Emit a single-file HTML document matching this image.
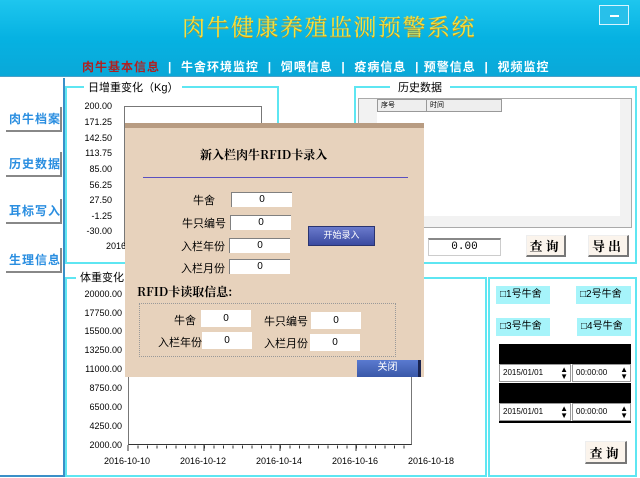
<!DOCTYPE html>
<html><head><meta charset="utf-8"><style>
*{margin:0;padding:0;box-sizing:border-box}
body{width:640px;height:478px;position:relative;overflow:hidden;background:#fff;font-family:"Liberation Sans","Noto Sans CJK SC",sans-serif;font-size:10px;color:#000}
.a{position:absolute;white-space:nowrap}
.hdr{left:0;top:0;width:640px;height:77px;background:linear-gradient(180deg,#1ec6ee 0%,#06b2e2 50%,#0aa8d8 100%);border-bottom:1px solid #4aa0c8}
.title{left:182px;top:9px;font-size:23px;color:#f5e040;letter-spacing:1.5px;text-shadow:0 1px 0 #b8901c;font-family:"Noto Serif CJK SC","WenQuanYi Zen Hei",serif}
.nav{top:58px;font-size:12px;font-weight:bold;color:#fff;letter-spacing:1px}
.grp{border:2px solid #5ee6f2}
.lg{background:#fff;padding:0 4px;font-size:11px}
.sb{left:6px;width:56px;height:25px;border-right:2px solid #888;border-bottom:2px solid #888;color:#2a8ee0;font-size:12px;font-weight:bold;letter-spacing:1px;padding-left:3px;line-height:24px}
.yl{font-size:9px;text-align:right;width:40px}
.in{background:#fff;border-top:1px solid #808080;border-left:1px solid #808080;text-align:center;font-size:10px;line-height:14px;height:15px}
.bt{background:#fbf4ec;border-right:2px solid #777;border-bottom:2px solid #777;border-top:1px solid #eee;border-left:1px solid #eee;font-size:13px;font-weight:bold;text-align:center;letter-spacing:3px;font-family:"Noto Serif CJK SC",serif}
.cb{background:#a6f4fa;height:18px;font-size:10px;line-height:18px;padding-left:4px}
.dt{background:#fff;border:1px solid #999;height:18px;font-size:8px;line-height:16px;padding-left:3px}
.dl{font-size:11px}
</style></head><body>
<div class="a hdr"></div>
<div class="a title">肉牛健康养殖监测预警系统</div>
<div class="a" style="left:599px;top:5px;width:30px;height:20px;border:1px solid #d8f4ff;background:#28c0ea"><div class="a" style="left:10px;top:9px;width:9px;height:2px;background:#fff"></div></div>
<div class="a nav" style="left:82px;color:#b02020">肉牛基本信息</div>
<div class="a nav" style="left:168px">|&nbsp; 牛舍环境监控 &nbsp;|&nbsp; 饲喂信息 &nbsp;|&nbsp; 疫病信息 &nbsp;|&nbsp;预警信息 &nbsp;|&nbsp; 视频监控</div>

<div class="a" style="left:0;top:78px;width:65px;height:399px;border-right:2px solid #3a90c8;border-bottom:2px solid #3a90c8"></div>
<div class="a sb" style="top:107px">肉牛档案</div>
<div class="a sb" style="top:152px">历史数据</div>
<div class="a sb" style="top:199px">耳标写入</div>
<div class="a sb" style="top:248px">生理信息</div>

<div class="a grp" style="left:65px;top:86px;width:214px;height:178px"></div>
<div class="a lg" style="left:84px;top:79px">日增重变化（Kg）</div>
<div class="a" style="left:124px;top:106px;width:138px;height:140px;border:1px solid #777"></div>
<div class="a yl" style="left:72px;top:101px">200.00</div>
<div class="a yl" style="left:72px;top:117px">171.25</div>
<div class="a yl" style="left:72px;top:133px">142.50</div>
<div class="a yl" style="left:72px;top:148px">113.75</div>
<div class="a yl" style="left:72px;top:164px">85.00</div>
<div class="a yl" style="left:72px;top:180px">56.25</div>
<div class="a yl" style="left:72px;top:195px">27.50</div>
<div class="a yl" style="left:72px;top:211px">-1.25</div>
<div class="a yl" style="left:72px;top:226px">-30.00</div>
<div class="a" style="left:106px;top:241px;font-size:9px">2016</div>

<div class="a grp" style="left:354px;top:86px;width:283px;height:178px"></div>
<div class="a lg" style="left:390px;top:79px;padding:0 8px">历史数据</div>
<div class="a" style="left:358px;top:98px;width:274px;height:130px;background:#f2f2f2;border:1px solid #aaa"></div>
<div class="a" style="left:377px;top:99px;width:243px;height:117px;background:#fff"></div>
<div class="a" style="left:377px;top:99px;width:125px;height:13px;background:#eee;border:1px solid #999;font-size:7px;line-height:11px;padding-left:3px">序号<span style="position:absolute;left:48px;top:0;border-left:1px solid #999;padding-left:3px;height:11px">时间</span></div>
<div class="a" style="left:428px;top:238px;width:73px;height:18px;border:1px solid #ccc;border-top:2px solid #888;background:#fff;text-align:center;font-size:11px;line-height:15px;font-family:'Liberation Mono',monospace">0.00</div>
<div class="a bt" style="left:526px;top:235px;width:40px;height:22px;line-height:20px">查询</div>
<div class="a bt" style="left:588px;top:235px;width:41px;height:22px;line-height:20px">导出</div>

<div class="a grp" style="left:65px;top:277px;width:422px;height:200px"></div>
<div class="a lg" style="left:76px;top:269px">体重变化</div>
<div class="a" style="left:128px;top:293px;width:284px;height:152px;border:1px solid #777;border-bottom-color:#333"></div>
<div class="a yl" style="left:72px;top:289px;width:50px">20000.00</div>
<div class="a yl" style="left:72px;top:308px;width:50px">17750.00</div>
<div class="a yl" style="left:72px;top:326px;width:50px">15500.00</div>
<div class="a yl" style="left:72px;top:345px;width:50px">13250.00</div>
<div class="a yl" style="left:72px;top:364px;width:50px">11000.00</div>
<div class="a yl" style="left:72px;top:383px;width:50px">8750.00</div>
<div class="a yl" style="left:72px;top:402px;width:50px">6500.00</div>
<div class="a yl" style="left:72px;top:421px;width:50px">4250.00</div>
<div class="a yl" style="left:72px;top:440px;width:50px">2000.00</div>
<div class="a" style="left:104px;top:456px;font-size:9px">2016-10-10</div>
<div class="a" style="left:180px;top:456px;font-size:9px">2016-10-12</div>
<div class="a" style="left:256px;top:456px;font-size:9px">2016-10-14</div>
<div class="a" style="left:332px;top:456px;font-size:9px">2016-10-16</div>
<div class="a" style="left:408px;top:456px;font-size:9px">2016-10-18</div>
<svg class="a" style="left:120px;top:440px" width="300" height="12"><g stroke="#333" stroke-width="1">
<line x1="8" y1="5" x2="8" y2="11"/><line x1="84" y1="5" x2="84" y2="11"/><line x1="160" y1="5" x2="160" y2="11"/><line x1="236" y1="5" x2="236" y2="11"/>
</g><g stroke="#333" stroke-dasharray="1 8.5"><line x1="17.5" y1="7" x2="292" y2="7" stroke-width="3"/></g></svg>

<div class="a grp" style="left:488px;top:277px;width:149px;height:200px"></div>
<div class="a cb" style="left:496px;top:286px;width:54px">□1号牛舍</div>
<div class="a cb" style="left:576px;top:286px;width:55px">□2号牛舍</div>
<div class="a cb" style="left:496px;top:318px;width:54px">□3号牛舍</div>
<div class="a cb" style="left:577px;top:318px;width:54px">□4号牛舍</div>
<div class="a" style="left:499px;top:344px;width:132px;height:20px;background:#000"></div>
<div class="a dt" style="left:499px;top:364px;width:72px">2015/01/01<span style="position:absolute;right:2px;top:1px;font-size:8px;line-height:7px">▲<br>▼</span></div>
<div class="a dt" style="left:572px;top:364px;width:59px">00:00:00<span style="position:absolute;right:2px;top:1px;font-size:8px;line-height:7px">▲<br>▼</span></div>
<div class="a" style="left:499px;top:383px;width:132px;height:20px;background:#000"></div>
<div class="a dt" style="left:499px;top:403px;width:72px">2015/01/01<span style="position:absolute;right:2px;top:1px;font-size:8px;line-height:7px">▲<br>▼</span></div>
<div class="a dt" style="left:572px;top:403px;width:59px">00:00:00<span style="position:absolute;right:2px;top:1px;font-size:8px;line-height:7px">▲<br>▼</span></div>
<div class="a" style="left:499px;top:421px;width:132px;height:2px;background:#000"></div>
<div class="a bt" style="left:585px;top:441px;width:42px;height:23px;line-height:21px">查询</div>

<div class="a" style="left:125px;top:123px;width:299px;height:254px;background:#e7d2bc;border-top:5px solid #b89c82"></div>
<div class="a" style="left:200px;top:146px;font-size:12px;font-weight:bold;font-family:'Noto Serif CJK SC',serif">新入栏肉牛RFID卡录入</div>
<div class="a" style="left:143px;top:177px;width:265px;height:1px;background:#5a50c0"></div>
<div class="a dl" style="left:193px;top:192px">牛舍</div>
<div class="a in" style="left:231px;top:192px;width:61px">0</div>
<div class="a dl" style="left:182px;top:215px">牛只编号</div>
<div class="a in" style="left:230px;top:215px;width:61px">0</div>
<div class="a dl" style="left:181px;top:238px">入栏年份</div>
<div class="a in" style="left:229px;top:238px;width:61px">0</div>
<div class="a dl" style="left:181px;top:260px">入栏月份</div>
<div class="a in" style="left:229px;top:259px;width:61px">0</div>
<div class="a" style="left:308px;top:226px;width:67px;height:20px;background:linear-gradient(#6a7acc,#3a4aa0);border:1px solid #2a3470;color:#fff;font-size:9px;text-align:center;line-height:17px">开始录入</div>
<div class="a" style="left:137px;top:283px;font-size:12px;font-weight:bold;font-family:'Noto Serif CJK SC',serif">RFID卡读取信息:</div>
<div class="a" style="left:139px;top:303px;width:257px;height:54px;border:1px dotted #999"></div>
<div class="a dl" style="left:174px;top:312px">牛舍</div>
<div class="a in" style="left:201px;top:310px;width:50px;border:none;height:17px;line-height:17px">0</div>
<div class="a dl" style="left:264px;top:313px">牛只编号</div>
<div class="a in" style="left:311px;top:312px;width:50px;border:none;height:17px;line-height:17px">0</div>
<div class="a dl" style="left:158px;top:334px">入栏年份</div>
<div class="a in" style="left:202px;top:332px;width:50px;border:none;height:17px;line-height:17px">0</div>
<div class="a dl" style="left:264px;top:335px">入栏月份</div>
<div class="a in" style="left:310px;top:334px;width:50px;border:none;height:17px;line-height:17px">0</div>
<div class="a" style="left:357px;top:360px;width:64px;height:17px;background:linear-gradient(#5a7ad0,#3a58a8);border-right:3px solid #1a2450;color:#fff;font-size:10px;text-align:center;line-height:16px">关闭</div>
</body></html>
